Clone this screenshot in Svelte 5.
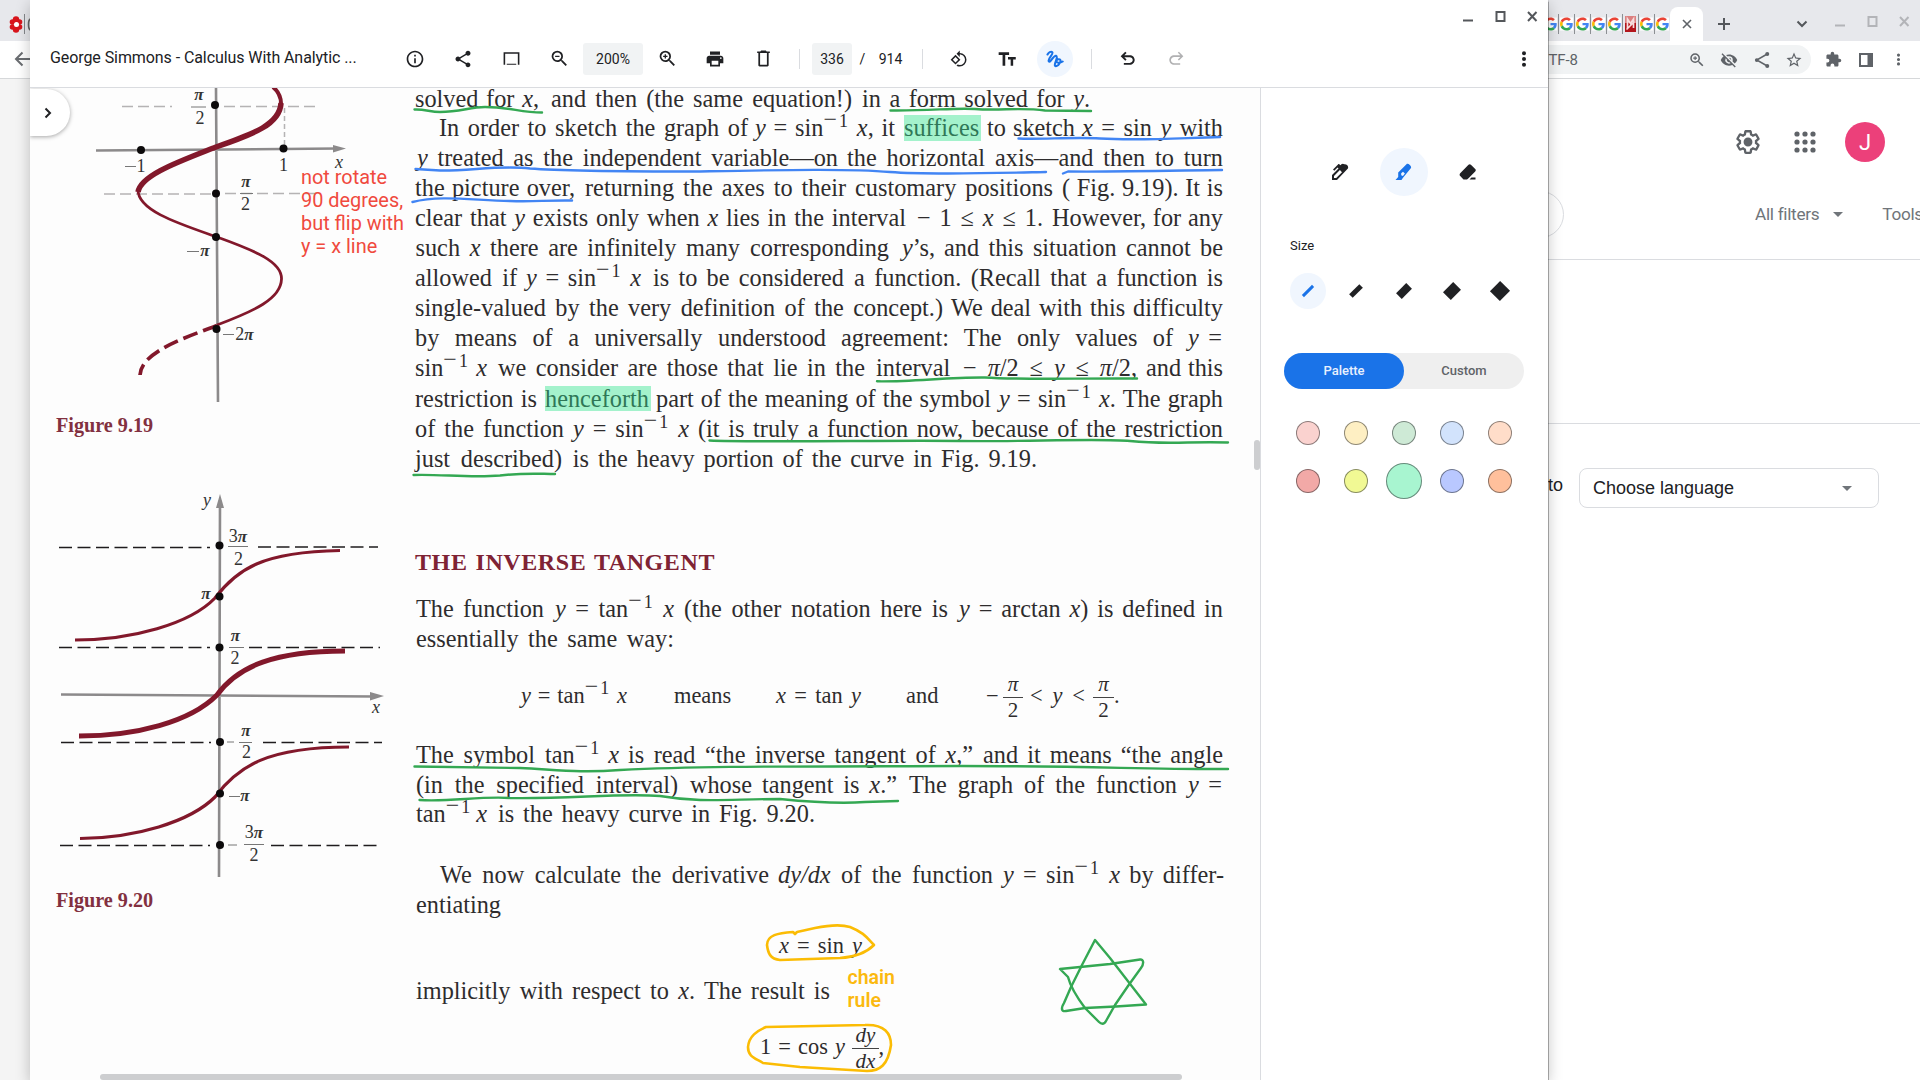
<script>
  const inv = '<sup><b>−</b>1</sup>';
  const x = '<i>x</i>';
  const y = '<i>y</i>';

  // Each line: baseline and runs of [left, right, html, class]
  const source = [
    [105.7, [[415, 539, `solved for ${x},`], [551, 852, 'and then (the same equation!)'], [862, 1090, `in a form solved for ${y}.`]]],
    [135.3, [[439, 748, 'In order to sketch the graph of'], [753, 895, `${y} = sin${inv} ${x}, it`], [904, 980.5, 'suffices', 'mark'], [987, 1075, 'to sketch'], [1082, 1223, `${x} = sin ${y} with`]]],
    [165.3, [[415, 838, `${y} treated as the independent variable—on`], [847, 1223, 'the horizontal axis—and then to turn']]],
    [195.3, [[415, 575, 'the picture over,'], [585, 1053, 'returning the axes to their customary positions'], [1062, 1223, '( Fig. 9.19). It is']]],
    [225.3, [[415, 906, `clear that ${y} exists only when ${x} lies in the interval`], [917, 1043, `− 1 ≤ ${x} ≤ 1.`], [1052, 1223, 'However, for any']]],
    [255.3, [[415.5, 740, `such ${x} there are infinitely many`], [750, 935, `corresponding ${y}’s,`], [944, 1223, 'and this situation cannot be']]],
    [285.5, [[415, 517, 'allowed if'], [524, 641, `${y} = sin${inv} ${x}`], [653, 844, 'is to be considered'], [854, 1223, 'a function. (Recall that a function is']]],
    [315.7, [[415, 943, 'single-valued by the very definition of the concept.)'], [951, 1223, 'We deal with this difficulty']]],
    [345.5, [[415, 826, 'by means of a universally understood'], [841, 1173, 'agreement: The only values of'], [1186, 1222, `${y} =`]]],
    [375.7, [[415, 487, `sin${inv} ${x}`], [498, 865, 'we consider are those that lie in the'], [876, 949, 'interval'], [963, 1137, `− <i>π</i>/2 ≤ ${y} ≤ <i>π</i>/2,`], [1146, 1223, 'and this']]],
    [405.8, [[415, 537, 'restriction is'], [545, 651, 'henceforth', 'mark'], [656, 991, 'part of the meaning of the symbol'], [997, 1223, `${y} = sin${inv} ${x}. The graph`]]],
    [435.8, [[415, 564, 'of the function'], [571, 689, `${y} = sin${inv} ${x}`], [698, 1223, '(it is truly a function now, because of the restriction']]],
    [466, [[415, 589, 'just described) is'], [598, 1037, 'the heavy portion of the curve in Fig. 9.19.']]],
    [568.9, [[415, 715, 'THE INVERSE TANGENT', 'heading']]],
    [616.6, [[416, 544, 'The function'], [553, 674, `${y} = tan${inv} ${x}`], [684, 948, '(the other notation here is'], [957, 1223, `${y} = arctan ${x}) is defined in`]]],
    [646.6, [[416, 674, 'essentially the same way:']]],
    [703, [[519, 627, `${y} = tan${inv} ${x}`, 'sm'], [674, 732, 'means', 'sm'], [776, 861, `${x} = tan ${y}`, 'sm'], [906, 938, 'and', 'sm'], [986, 1000, '−', 'sm'], [1003, 1023, '<em><i>π</i></em><em>2</em>', 'frac'], [1030, 1085, `&lt; ${y} &lt;`, 'sm'], [1093, 1114, '<em><i>π</i></em><em>2</em>', 'frac'], [1114, 1119, '.', 'sm']]],
    [761.9, [[416, 535, 'The symbol'], [545, 619, `tan${inv} ${x}`], [628, 973, `is read “the inverse tangent of ${x},”`], [983, 1223, 'and it means “the angle']]],
    [792, [[416, 752, '(in the specified interval) whose'], [762, 897, `tangent is ${x}.”`], [909, 1177, 'The graph of the function'], [1186, 1222, `${y} =`]]],
    [821.7, [[416, 487, `tan${inv} ${x}`], [498, 815, 'is the heavy curve in Fig. 9.20.']]],
    [882.4, [[440, 769, 'We now calculate the derivative'], [778, 993, '<i>dy/dx</i> of the function'], [1001, 1224, `${y} = sin${inv} ${x} by differ-`]]],
    [912.4, [[416, 501, 'entiating']]],
    [953.4, [[779, 862, `${x} = sin ${y}`, 'sm']]],
    [998.6, [[416, 695, `implicitly with respect to ${x}.`], [704, 830, 'The result is']]],
    [1054.8, [[760, 845, `1 = cos ${y}`, 'sm'], [852, 879, '<em><i>dy</i></em><em><i>dx</i></em>', 'frac'], [878.5, 884, ',', 'sm']]]
  ];

  let bottom = 88;
  const lines = source.map(([base, runs]) => {
    const top = base - 22.2;
    const gap = top - bottom;
    bottom = top + 30;
    let edge = 410;
    const parts = runs.map(([left, r, html, cls = '']) => {
      // the italic y hangs out to the left of its box
      const l = html.startsWith(y) ? left + 2 : left;
      const part = { gap: l - edge, width: r - l, html, cls };
      edge = r;
      return part;
    });
    return { gap, parts };
  });

  const icons = {
    info: 'M11 7h2v2h-2zm0 4h2v6h-2zm1-9C6.48 2 2 6.48 2 12s4.48 10 10 10 10-4.480 10-10S17.52 2 12 2zm0 18c-4.410 0-8-3.590-8-8s3.590-8 8-8 8 3.590 8 8-3.590 8-8 8z',
    share: 'M18 16.080c-.76 0-1.440.3-1.960.77L8.910 12.700c.05-.23.09-.46.09-.7s-.04-.47-.09-.7l7.050-4.110c.54.5 1.250.81 2.040.81 1.660 0 3-1.340 3-3s-1.340-3-3-3-3 1.340-3 3c0 .24.04.47.09.7L8.040 9.810C7.500 9.310 6.790 9 6 9c-1.660 0-3 1.340-3 3s1.340 3 3 3c.79 0 1.500-.31 2.040-.81l7.120 4.160c-.05.21-.08.43-.08.65 0 1.610 1.310 2.920 2.920 2.920s2.920-1.310 2.920-2.920-1.310-2.920-2.920-2.920z',
    present: 'M2 4h20v16h-2V6H4v14H2zM6 18.500h12v1.500H6z',
    zoomOut: 'M15.500 14h-.79l-.28-.27A6.470 6.470 0 0 0 16 9.500 6.500 6.500 0 1 0 9.500 16c1.610 0 3.090-.59 4.230-1.570l.27.28v.79l5 4.990L20.490 19l-4.990-5zm-6 0C7.010 14 5 11.990 5 9.500S7.010 5 9.500 5 14 7.010 14 9.500 11.990 14 9.500 14zM7 8.800h5v1.500H7z',
    zoomIn: 'M15.500 14h-.79l-.28-.27A6.470 6.470 0 0 0 16 9.500 6.500 6.500 0 1 0 9.500 16c1.610 0 3.090-.59 4.230-1.570l.27.28v.79l5 4.990L20.490 19l-4.990-5zm-6 0C7.010 14 5 11.990 5 9.500S7.010 5 9.500 5 14 7.010 14 9.500 11.990 14 9.500 14zM12 8.800h-1.750V7h-1.500v1.800H7v1.500h1.750V12h1.500v-1.700H12z',
    print: 'M19 8H5c-1.660 0-3 1.340-3 3v6h4v4h12v-4h4v-6c0-1.660-1.340-3-3-3zm-3 11H8v-5h8v5zm3-7c-.55 0-1-.45-1-1s.45-1 1-1 1 .45 1 1-.45 1-1 1zm-1-9H6v4h12V3z',
    trash: 'M16 3l-1-1H9L8 3H4v2h1.500v15.500c0 .8.700 1.500 1.500 1.500h10c.8 0 1.500-.7 1.500-1.500V5H20V3zm.3 16.800H7.700V5h8.600z',
    rotate: 'M7.340 6.410L.86 12.900l6.490 6.480 6.490-6.480-6.500-6.490zM3.690 12.900l3.660-3.660L11 12.900l-3.660 3.660-3.650-3.660zm15.670-6.260A8.950 8.950 0 0 0 13 4V.76L8.760 5 13 9.240V6c1.790 0 3.580.68 4.950 2.050a7.007 7.007 0 0 1 0 9.900A6.973 6.973 0 0 1 13 20c-.97 0-1.940-.21-2.840-.61l-1.490 1.490C10.020 21.620 11.510 22 13 22a8.950 8.950 0 0 0 6.360-2.640 8.980 8.980 0 0 0 0-12.720z',
    text: 'M2 4v3.200h4.700V20h3.200V7.200h4.600V4zm20.500 5.500h-9.300v3h3.200V20h3v-7.500h3.100z',
    undo: 'M7 19v-2.300h7.100c2 0 3.600-1.500 3.600-3.400s-1.600-3.400-3.600-3.400H7.600l2.700 2.700-1.600 1.600L3.200 8.700l5.500-5.500 1.600 1.700-2.700 2.700h6.500c3.300 0 5.900 2.500 5.900 5.700S17.400 19 14.100 19z',
    redo: 'M17 19v-1.900H9.900c-2.200 0-4-1.700-4-3.800s1.800-3.800 4-3.800h7.300l-3 3 1.300 1.300 5.300-5.200-5.300-5.300-1.300 1.300 3 3H9.900C6.600 7.600 4 10.100 4 13.300S6.600 19 9.900 19z',
    more: 'M12 8a2.200 2.200 0 1 0 0-4.400A2.200 2.200 0 0 0 12 8zm0 6.200a2.200 2.200 0 1 0 0-4.400 2.200 2.200 0 0 0 0 4.400zm0 6.200a2.200 2.200 0 1 0 0-4.400 2.200 2.200 0 0 0 0 4.400z',
    eyeOff: 'M12 7a5 5 0 0 1 5 5c0 .65-.13 1.260-.36 1.830l2.920 2.920A11.800 11.800 0 0 0 23 12C21.270 7.610 17 4.500 12 4.500c-1.400 0-2.740.25-3.980.7l2.160 2.160C10.740 7.130 11.350 7 12 7zM2 4.270l2.740 2.740A11.800 11.800 0 0 0 1 12c1.730 4.390 6 7.500 11 7.500 1.550 0 3.030-.3 4.380-.84l3.350 3.340L21 20.730 3.270 3 2 4.270zM7.530 9.800l1.550 1.550A3 3 0 0 0 12.650 14.920l1.550 1.550A5 5 0 0 1 7.530 9.800zm4.310-.78l3.150 3.150.02-.16a3 3 0 0 0-3-3l-.17.01z',
    star: 'M22 9.240l-7.190-.62L12 2 9.190 8.630 2 9.240l5.460 4.730L5.820 21 12 17.270 18.180 21l-1.630-7.030L22 9.240zM12 15.400l-3.760 2.270 1-4.280-3.320-2.880 4.380-.38L12 6.100l1.710 4.040 4.380.38-3.320 2.880 1 4.280L12 15.400z',
    puzzle: 'M20.500 11H19V7c0-1.100-.9-2-2-2h-4V3.500a2.500 2.500 0 0 0-5 0V5H4c-1.100 0-2 .9-2 2v3.800h1.500a2.700 2.700 0 0 1 0 5.400H2V20c0 1.100.9 2 2 2h3.800v-1.500a2.700 2.700 0 0 1 5.400 0V22H17c1.100 0 2-.9 2-2v-4h1.500a2.500 2.500 0 0 0 0-5z',
    gear: 'M13.850 22.250h-3.700c-.74 0-1.360-.54-1.450-1.270l-.27-1.890c-.27-.14-.53-.29-.79-.46l-1.800.72c-.7.26-1.470-.03-1.810-.65L2.200 15.530c-.35-.66-.2-1.440.36-1.880l1.530-1.190c-.01-.15-.02-.3-.02-.46s.01-.31.02-.46l-1.520-1.190c-.59-.45-.74-1.260-.37-1.880l1.850-3.190c.34-.62 1.110-.9 1.790-.63l1.810.73c.26-.17.52-.32.78-.46l.27-1.910c.09-.7.71-1.250 1.440-1.250h3.700c.74 0 1.360.54 1.450 1.270l.27 1.890c.27.14.53.29.79.46l1.800-.72c.71-.26 1.480.03 1.820.65l1.840 3.180c.36.66.2 1.440-.36 1.880l-1.520 1.190c.01.15.02.3.02.46s-.01.31-.02.46l1.520 1.190c.56.45.72 1.230.37 1.860l-1.860 3.220c-.34.62-1.110.9-1.800.63l-1.800-.72c-.26.17-.52.32-.78.46l-.27 1.910c-.1.68-.72 1.220-1.460 1.220zm-3.230-2h2.760l.37-2.550.53-.22c.44-.18.88-.44 1.340-.78l.45-.34 2.380.96 1.380-2.400-2.030-1.580.07-.56c.03-.26.06-.51.06-.78s-.03-.53-.06-.78l-.07-.56 2.030-1.580-1.390-2.400-2.390.96-.45-.35c-.42-.32-.87-.58-1.330-.77l-.52-.22-.37-2.550h-2.760l-.37 2.550-.53.21c-.44.19-.88.44-1.340.79l-.45.33-2.380-.95-1.390 2.390 2.030 1.580-.07.56a7 7 0 0 0-.06.79c0 .26.02.53.06.78l.07.56-2.030 1.580 1.380 2.400 2.390-.96.45.35c.43.33.86.58 1.330.77l.53.22zM12 15.800a3.800 3.800 0 1 0 0-7.600 3.800 3.800 0 0 0 0 7.600z'
  };

  const tabs = ['g', 'g', 'g', 'g', 'g', 'm', 'g', 'g'];
  const strokeSizes = [3, 5, 8, 11, 14];
  const swatches = ['#fad2cf', '#feefc3', '#ceead6', '#d2e3fc', '#ffddc9', '#f2a9a7', '#f1f994', '#a8f5d0', '#b9c8ff', '#ffc09c'];
</script>

{#snippet icon(name, size = 24)}
  <svg width={size} height={size} viewBox="0 0 24 24" fill="currentColor"><path fill-rule="evenodd" d={icons[name]} /></svg>
{/snippet}

{#snippet winButtons()}
  <svg width="80" height="14" viewBox="0 0 80 14" fill="none" stroke="currentColor" stroke-width="2">
    <path d="M3 11.500h10" /><path d="M36.500 3h8v9h-8z" /><path d="M68 3l8.500 9M76.500 3L68 12" />
  </svg>
{/snippet}

<div class="desktop">
  <div class="browser">
    <div class="strip">
      <div class="leftTabs">
        <svg width="30" height="24" viewBox="0 0 30 24">
          <g fill="#d8151c"><circle cx="16" cy="7.500" r="3.200" /><circle cx="12.500" cy="10" r="2.800" /><circle cx="19.500" cy="10" r="2.800" /><circle cx="12.500" cy="15" r="2.800" /><circle cx="19.500" cy="15" r="2.800" /><circle cx="16" cy="17.500" r="3.200" /></g>
          <circle cx="16.500" cy="12.500" r="2.500" fill="#fff" />
          <path d="M24.500 2v20" stroke="#84878b" /><path d="M31 7c-2 0-2.500 2-2.500 5.500S29 18 31 18" stroke="#666" stroke-width="1.600" fill="none" />
        </svg>
      </div>
      <div class="rightTabs">
        <div class="favs">
          {#each tabs as t}
            <span class="fav">
              {#if t === 'g'}
                <svg width="13" height="16" viewBox="0 0 48 48"><path fill="#fff" d="M0 0h48v48H0z" /><path fill="#EA4335" d="M24 9.500c3.540 0 6.710 1.220 9.210 3.600l6.850-6.850C35.900 2.380 30.470 0 24 0 14.620 0 6.510 5.380 2.560 13.220l7.980 6.190C12.430 13.720 17.740 9.500 24 9.500z" /><path fill="#4285F4" d="M46.980 24.550c0-1.570-.15-3.090-.38-4.550H24v9.020h12.940c-.58 2.960-2.260 5.480-4.780 7.180l7.730 6c4.510-4.180 7.090-10.360 7.090-17.650z" /><path fill="#FBBC05" d="M10.530 28.590A14.500 14.500 0 0 1 9.770 24c0-1.600.27-3.140.76-4.590l-7.980-6.190A23.900 23.900 0 0 0 0 24c0 3.880.92 7.540 2.560 10.780z" /><path fill="#34A853" d="M24 48c6.480 0 11.930-2.130 15.890-5.810l-7.730-6C30.010 37.640 27.240 38.490 24 38.490c-6.260 0-11.570-4.220-13.470-9.910l-7.980 6.190C6.510 42.620 14.620 48 24 48z" /></svg>
              {:else}
                <svg width="11" height="16" viewBox="0 0 11 16"><path fill="#dc8080" d="M0 0h11v9H0z" /><path fill="#b3161c" d="M0 7h11v9H0z" /><path d="M2.500 13V3l3 4.500L8.500 3v9M1.500 13.500l8-8" stroke="#f6dede" stroke-width="1.700" fill="none" /></svg>
              {/if}
            </span>
          {/each}
        </div>
        <div class="activeTab"><svg width="10" height="10" viewBox="0 0 10 10" stroke="#5f6368" stroke-width="1.600"><path d="M1 1l8 8M9 1L1 9" /></svg></div>
        <svg class="plus" width="12" height="12" viewBox="0 0 12 12" stroke="#54575b" stroke-width="2"><path d="M6 0v12M0 6h12" /></svg>
        <svg class="chev" width="12" height="10" viewBox="0 0 12 10" stroke="#54575b" stroke-width="2" fill="none"><path d="M1.500 2.500L6 7l4.500-4.500" /></svg>
        <div class="sysBtns">{@render winButtons()}</div>
      </div>
    </div>
    <div class="addr">
      <svg class="back" width="16" height="16" viewBox="0 0 16 16" fill="none" stroke="#6a6d71" stroke-width="2"><path d="M16 8H2M8.500 1.500L2 8l6.500 6.500" /></svg>
      <div class="pill">
        <span class="utf">UTF-8</span>
        {@render icon('zoomIn', 18)}{@render icon('eyeOff', 18)}
        <svg width="18" height="18" viewBox="0 0 24 24" fill="#5f6368"><circle cx="5" cy="12" r="2.500" /><circle cx="19" cy="4" r="2.700" /><circle cx="19" cy="20" r="2.700" /><path d="M19 4L5 12l14 8" stroke="#5f6368" stroke-width="2" fill="none" /></svg>
        {@render icon('star', 18)}
      </div>
      <div class="ext">
        {@render icon('puzzle', 17)}
        <svg width="14" height="14" viewBox="0 0 14 14"><path d="M1 1h12v12H1z" fill="none" stroke="#5f6368" stroke-width="2" /><path d="M8.500 1H13v12H8.500z" fill="#5f6368" /></svg>
        {@render icon('more', 17)}
      </div>
    </div>
    <div class="web">
      <div class="results">
        <div class="account">
          <div class="searchEnd"></div>
          <div class="tools">
            {@render icon('gear', 28)}
            <svg width="22" height="22" viewBox="0 0 22 22" fill="#5f6368">
              {#each [3, 11, 19] as cx}{#each [3, 11, 19] as cy}<circle {cx} {cy} r="2.600" />{/each}{/each}
            </svg>
            <div class="avatar">J</div>
          </div>
          <div class="filters"><span>All filters</span><i class="caret"></i><span class="bar"></span><span>Tools</span></div>
        </div>
        <div class="blank"></div>
        <div class="lang"><span>to</span><div class="select"><span>Choose language</span><i class="caret"></i></div></div>
      </div>
    </div>
  </div>

  <div class="app">
    <div class="titlebar"><div class="appBtns">{@render winButtons()}</div></div>
    <div class="toolbar">
      <div class="title">George Simmons - Calculus With Analytic ...</div>
      <span class="slot">{@render icon('info', 20)}</span>
      <span class="slot">{@render icon('share', 20)}</span>
      <span class="slot">{@render icon('present', 19)}</span>
      <span class="slot">{@render icon('zoomOut', 21)}</span>
      <span class="box zoom">200%</span>
      <span class="slot">{@render icon('zoomIn', 21)}</span>
      <span class="slot">{@render icon('print', 20)}</span>
      <span class="slot">{@render icon('trash', 19)}</span>
      <span class="sep"></span>
      <span class="box page">336</span><span class="of">/</span><span class="total">914</span>
      <span class="sep"></span>
      <span class="slot">{@render icon('rotate', 18)}</span>
      <span class="slot">{@render icon('text', 20)}</span>
      <span class="slot"><span class="ink">
        <svg width="18" height="18" viewBox="0 0 18 18" fill="none" stroke="#1a73e8" stroke-width="2.100" stroke-linecap="round"><path d="M1.500 4.500C2.500 2.500 5 .8 6.300 2.300c1.500 2-5 6.200-3.500 9C4.500 13.500 7.500 5 10 5.800c3 1.200-2.300 7.700-1 9.900 1.200 1.700 6-2 5.500-5.200-.4-2.200-3.800-1.300-4 .5-.2 2.200 3.500 2.400 6.200.5" /></svg>
      </span></span>
      <span class="sep"></span>
      <span class="slot">{@render icon('undo', 20)}</span>
      <span class="slot faded">{@render icon('redo', 20)}</span>
      <span class="grow"></span>
      <span class="slot">{@render icon('more', 22)}</span>
    </div>

    <div class="body">
      <div class="doc">
        <svg class="figures" width="379" height="992" viewBox="31 88 379 992">
          <g fill="none" stroke="#8c8a8b" stroke-width="2.600">
            <path d="M216 88L218 402M96 150.500L338 148.500" />
            <path d="M220 500L219 877M61 694.500L374 696.500" />
          </g>
          <g fill="#8c8a8b"><path d="M333 145l13 3.500-13 4z" /><path d="M216 508l4-14 4 14z" /><path d="M370 692l14 4-14 4.500z" /></g>
          <g fill="none" stroke="#b5b3b4" stroke-width="1.500">
            <path stroke-dasharray="11 5" d="M122 106.500h50M224 106.500h92M104 194h108M225 193.500h92" />
            <path d="M284.500 108v38" stroke-dasharray="5 3" />
          </g>
          <g fill="none" stroke="#1f1c1e" stroke-width="1.700" stroke-dasharray="13 5.500">
            <path d="M59 547.500h151M258 547h120M59 647.500h151M249 647.500h131M61 742.500h150M263 742.500h119M60 845.500h150M271 845.500h111" />
          </g>
          <g fill="none" stroke="#82182b">
            <path stroke-width="4" d="M273 87C279 92 281.500 99 281 106" />
            <path stroke-width="5.500" d="M281 103C280 124 254 134 216 147C178 162 141 175 138 192" />
            <path stroke-width="2.800" d="M138 190C138 211 180 224 217 237C256 251 282 262 281.500 279C281 299 254 311 217 325" />
            <path stroke-width="3.700" stroke-dasharray="15 6" d="M217 325.500C190 336 141 351 140 375" />
            <path stroke-width="3.200" d="M75 640C132 640 190 624 215 598C237 569 262 552 340 550.500" />
            <path stroke-width="5" d="M79 736C136 736 190 722 217 695C238 666 275 651 345 651" />
            <path stroke-width="3.200" d="M80 838.500C135 838 190 822 215 797C238 766 268 747 349 747" />
          </g>
          <g fill="#0c0a0b">
            {#each [[215, 105], [141, 150], [283.500, 148.500], [216, 193.500], [216, 237], [216.500, 329], [219.500, 545.500], [219.500, 596.500], [219.500, 647.500], [220, 742], [220, 793.500], [220, 845]] as [cx, cy]}
              <circle {cx} {cy} r="4" />
            {/each}
          </g>
          <path stroke="#777" d="M191 107h15M240 193.500h13M228 546.500h20M229 647.500h15M227 742h7M239 742.500h13M228 845h9M244 844.500h20M125 166.500h11M187 251.500h12M223 334.500h11M229 796.500h11" />
          <g class="math" text-anchor="middle">
            <text x="199" y="100"><tspan class="pi">π</tspan></text><text x="200" y="123.500">2</text>
            <text x="141" y="172">1</text><text x="283.500" y="170.500">1</text><text x="339" y="168" font-style="italic">x</text>
            <text x="246" y="187"><tspan class="pi">π</tspan></text><text x="245.500" y="210">2</text>
            <text x="205" y="256"><tspan class="pi">π</tspan></text><text x="244.500" y="340">2<tspan class="pi">π</tspan></text>
            <text x="207" y="506" font-style="italic">y</text>
            <text x="238" y="542">3<tspan class="pi">π</tspan></text><text x="238.500" y="565">2</text>
            <text x="206" y="599"><tspan class="pi">π</tspan></text>
            <text x="235.500" y="641"><tspan class="pi">π</tspan></text><text x="235" y="664">2</text>
            <text x="246" y="735.500"><tspan class="pi">π</tspan></text><text x="246.500" y="758">2</text>
            <text x="245" y="801"><tspan class="pi">π</tspan></text>
            <text x="254" y="838">3<tspan class="pi">π</tspan></text><text x="254" y="861">2</text>
            <text x="376" y="713" font-style="italic">x</text>
          </g>
          <g class="caption"><text x="56" y="431.700">Figure 9.19</text><text x="56" y="906.700">Figure 9.20</text></g>
        </svg>

        <div class="column">
          {#each lines as line}
            <div class="line" style="margin-top:{line.gap}px">
              {#each line.parts as p}
                <span class="run {p.cls}" style="margin-left:{p.gap}px;width:{p.width}px">{@html p.html}</span>
              {/each}
            </div>
          {/each}
        </div>

        <svg class="ink-layer" width="1229" height="992" viewBox="31 88 1229 992">
          <g fill="none" stroke-width="2.400" stroke-linecap="round" stroke-linejoin="round">
            <g stroke="#34a853">
              <path d="M414.500 109.500C425 109 430 112 440 112C460 112 470 107 485 107C510 107 520 112.500 542 112.500" />
              <path d="M890.500 110.500C930 111 955 107.500 975 109C1000 111 1020 107 1045 110.500L1091 111" />
              <path d="M877 381.300C910 382 950 377 985 377.500C1020 380 1080 378 1137 378.500" />
              <path d="M709.500 440.500C760 442.500 900 440 960 441C1020 442 1100 438 1130 441C1170 445 1190 441 1228 442.500" />
              <path d="M413.500 475C440 474 470 478 500 475.500C525 472.500 540 474 555 474" />
              <path d="M414.500 766.500L520 768C560 770 580 773 620 770C700 766 780 766.500 960 766C1090 766 1150 769.500 1228 769" />
              <path d="M419.500 800C450 802 480 796 510 798C570 799 620 793 660 796C700 803 730 799 780 799C810 802 840 804 865 802L898 801" />
              <path d="M1095 940L1110 958L1146 1004.500L1116 1006.500L1085 1008L1066 1011C1061 1012 1061 1008 1064 1003L1071 987L1082 965Z" />
              <path d="M1060 969L1110 964L1140 959.500C1144 959 1144 964 1141 968L1128 986L1115 1005L1106 1021C1104 1025 1101 1024 1099 1022L1085 1008C1076 996 1070 985 1068 977Z" />
            </g>
            <g stroke="#4285f4">
              <path d="M1018.500 138.500C1040 139.500 1075 137 1100 138.500C1140 141 1180 138 1220 137" />
              <path d="M415.500 169L440 170.500C470 171 500 165 530 168.500C560 171 620 171.500 700 171.500C780 170 850 168.500 890 172C930 175 1000 173 1046 172" />
              <path d="M1063 173.500L1068 171.500C1120 172 1180 170.500 1222 170" />
              <path d="M412.500 202C440 195 470 200 510 201C535 202 545 200 572 200.500" />
            </g>
            <g stroke="#fbbc04" stroke-width="2.600">
              <path d="M793 932C778 933 767 935 767 945C768 953 770 959 780 960L840 958C857 957 867 952 874 945C867 938 865 933 850 927C840 924 825 926 815 928L797 932L795 934Z" />
              <path d="M766 1027L865 1025C885 1024 891 1034 891 1045C888 1065 880 1071 867 1071L800 1067L763 1063C755 1058 748 1057 748 1047C749 1036 757 1031 766 1027" />
            </g>
          </g>
          <g class="note red"><text x="301" y="184">not rotate</text><text x="301" y="207.300">90 degrees,</text><text x="301" y="230">but flip with</text><text x="301" y="253">y = x line</text></g>
          <g class="note gold"><text x="847.500" y="983.500">chain</text><text x="847.500" y="1006.500">rule</text></g>
        </svg>
        <div class="expand"><svg width="8" height="12" viewBox="0 0 8 12" fill="none" stroke="#202124" stroke-width="2"><path d="M1.500 1.500L6 6l-4.500 4.500" /></svg></div>
        <div class="vbar"></div>
        <div class="hbar"></div>
      </div>

      <div class="side">
        <div class="pens">
          <span><svg width="18" height="18" viewBox="0 0 18 18"><path fill="#202124" fill-rule="evenodd" d="M1 17v-5L7.500 5.500l-1-1L3.300 7.700 2 6.400 7 1.400c.5-.5 1-.5 1.500 0l.9.9 1-1c.9-.9 2-.9 2.900 0 1.500-.6 4.800 1.300 3.600 4.200L6 17zM3 15h2.200l5.800-5.800L8.900 7 3 12.900z" /></svg></span>
          <span class="on"><svg width="18" height="18" viewBox="0 0 18 18"><path fill="#1a73e8" fill-rule="evenodd" d="M.5 17l2.700-3v-4.500L11.500 1.200c1.500-1.500 5.800 2.200 4.300 4L8 14.800 6.500 17zM6.200 10.200v2l1.700.8 2-2.400L8 8.700z" /></svg></span>
          <span><svg width="18" height="18" viewBox="0 0 18 18" fill="#202124"><path d="M1.200 10.200l8.300-8.400c.8-.8 1.600-.8 2.400 0l4.300 4.300c.8.8.8 1.500 0 2.300L9.500 15.200 8 16.500H4.500L1.200 13c-.8-.8-.8-2 0-2.800zM12.500 14.500h4v2h-6z" /></svg></span>
        </div>
        <div class="label">Size</div>
        <div class="sizes">
          {#each strokeSizes as s, i}
            <span class:on={i === 0}><svg width="24" height="24" viewBox="0 0 24 24"><rect x="4.800" y={12 - s / 2} width="14.400" height={s} fill="currentColor" transform="rotate(-45 12 12)" /></svg></span>
          {/each}
        </div>
        <div class="toggle"><span class="sel">Palette</span><span>Custom</span></div>
        <div class="swatches">
          {#each swatches as c, i}<span><i class="dot" class:big={i === 7} style="background:{c}"></i></span>{/each}
        </div>
      </div>
    </div>
  </div>
</div>

<style>
  :global(body) { overflow: hidden; }
  .desktop { position: relative; width: 1920px; height: 1080px; overflow: hidden; font-family: Roboto, sans-serif; }
  svg { display: block; flex: none; }
  .browser { height: 1080px; display: flex; flex-direction: column; background: #fff; }
  .strip { height: 41px; background: #e7e8ec; display: flex; justify-content: space-between; }
  .leftTabs { padding-top: 12px; }
  .rightTabs { width: 376px; display: flex; }
  .favs { display: flex; width: 126px; height: 41px; align-items: center; padding-top: 7px; box-sizing: border-box; justify-content: flex-end; }
  .fav { width: 15px; height: 20px; flex: none; display: flex; align-items: center; justify-content: center; border-left: 1px solid #8c8f93; }
  .activeTab { width: 33px; height: 34px; margin-top: 7px; background: #fff; border-radius: 8px 8px 0 0; display: flex; align-items: center; justify-content: center; }
  .plus { margin: 18px 0 0 15px; }
  .chev { margin: 19px 0 0 66px; }
  .sysBtns { color: #b3b4b8; margin: 14px 0 0 24px; }
  .addr { height: 37px; border-bottom: 1px solid #d6d8da; display: flex; align-items: center; color: #5f6368; }
  .back { margin: 0 0 2px 14px; }
  .pill { margin-left: 1410px; width: 371px; height: 29px; border-radius: 0 15px 15px 0; background: #f1f3f4; display: flex; align-items: center; justify-content: flex-end; gap: 14.300px; padding-right: 8px; box-sizing: border-box; }
  .pill svg { margin-left: 0; }
  .utf { font-size: 15px; margin-right: 96px; letter-spacing: -0.1px; }
  .ext { display: flex; align-items: center; margin-left: 14px; gap: 17px; }
  .web { flex: 1; background: linear-gradient(90deg, #f4f4f4 40px, #fff 40px); display: flex; justify-content: flex-end; }
  .results { width: 372px; display: flex; flex-direction: column; }
  .account { height: 180px; border-bottom: 1px solid #dadce0; position: relative; box-sizing: content-box; }
  .searchEnd { position: absolute; left: -50px; top: 112px; width: 64px; height: 45px; border: 1px solid #dadce0; border-radius: 24px; }
  .tools { display: flex; align-items: center; color: #5f6368; padding: 43px 0 0 186px; }
  .tools svg + svg { margin-left: 32px; }
  .avatar { width: 40px; height: 40px; border-radius: 50%; background: #ec407a; color: #fff; font-size: 22px; display: flex; align-items: center; justify-content: center; margin-left: 29px; }
  .filters { display: flex; align-items: center; margin: 38px 0 0 207px; height: 28px; font-size: 17.200px; letter-spacing: -0.300px; color: #70757a; white-space: nowrap; }
  .caret { border: 5.500px solid transparent; border-top-color: #70757a; border-bottom: 0; }
  .filters .caret { margin: 0 23px 0 14px; }
  .bar { width: 1px; height: 25px; background: #dadce0; margin-right: 16px; }
  .blank { height: 163px; border-bottom: 1px solid #dadce0; }
  .lang { display: flex; align-items: center; padding-top: 44px; font: 18px "Liberation Sans", sans-serif; color: #202124; }
  .lang > span { width: 31px; margin-top: -5px; }
  .select { width: 300px; height: 40px; box-sizing: border-box; border: 1px solid #dadce0; border-radius: 8px; display: flex; align-items: center; justify-content: space-between; padding: 0 26px 0 13px; }
  .select .caret { border-width: 5px 5.500px 0; }

  .app { position: absolute; left: 30px; top: 0; width: 1518px; height: 1080px; background: #fff; box-shadow: 0 0 1px 0.500px rgba(0,0,0,.3), 0 4px 14px rgba(0,0,0,.24); display: flex; flex-direction: column; }
  .titlebar { height: 32px; display: flex; justify-content: flex-end; box-sizing: border-box; padding: 9px 8px 0 0; }
  .appBtns { color: #54575b; }
  .toolbar { height: 53px; padding-bottom: 2px; display: flex; align-items: center; border-bottom: 1px solid #dadce0; color: #202124; box-sizing: content-box; font-size: 14px; }
  .title { width: 341px; margin-left: 20px; font-size: 16px; line-height: 20px; margin-top: -1px; white-space: nowrap; letter-spacing: -0.08px; }
  .slot { width: 48px; display: flex; align-items: center; justify-content: center; flex: none; }
  .faded { opacity: .35; }
  .box { background: #f1f3f4; border-radius: 3px; height: 32px; display: flex; align-items: center; justify-content: center; }
  .zoom { width: 60px; }
  .page { width: 40px; }
  .of { width: 21px; text-align: center; }
  .total { width: 35px; text-align: center; margin-right: 2px; }
  .sep { width: 1px; height: 20px; background: #dadce0; margin: 0 12px; }
  .ink { width: 36px; height: 36px; border-radius: 50%; background: #f0f6fe; display: flex; align-items: center; justify-content: center; }
  .grow { flex: 1; }
  .body { flex: 1; display: flex; min-height: 0; }
  .doc { position: relative; width: 1230px; background: #fdfdfd; overflow: hidden; display: flex; flex: none; }
  .figures { margin-left: 1px; }
  .math { font: 18px "Liberation Serif", serif; fill: #333; }
  .pi { font-style: italic; font-weight: bold; font-size: 17px; }
  .caption { font: bold 20.200px "Liberation Serif", serif; fill: #823040; }
  .column { width: 850px; display: flex; flex-direction: column; flex: none; }
  .line { height: 30px; display: flex; flex: none; font: 24.300px/30px "Liberation Serif", serif; color: #2e2c2d; }
  .run { flex: none; text-align: justify; text-align-last: justify; white-space: normal; height: 30px; word-spacing: -3px; }
  .run.mark { background: #a4f2cc; color: #2f7757; height: 25.500px; line-height: 25px; margin-top: 2px; text-align: left; text-align-last: left; }
  .run.sm { font-size: 22.400px; }
  .run.heading { font-size: 24px; font-weight: bold; color: #7f2334; letter-spacing: .600px; }
  .run :global(sup) { font-size: 18px; line-height: 0; vertical-align: 9px; letter-spacing: 1px; }
  .run :global(sup b) { font-weight: normal; font-size: 24px; letter-spacing: 2px; }
  .run.frac { display: flex; flex-direction: column; text-align-last: center; font-size: 21px; line-height: 25px; margin-top: -9px; height: 52px; }
  .run.frac :global(em) { font-style: normal; height: 25px; display: block; }
  .run.frac :global(em + em) { border-top: 1.500px solid #444; }
  .ink-layer { position: absolute; left: 1px; top: 0; }
  .note { font-family: Roboto, sans-serif; font-size: 19.900px; }
  .red { fill: #f04a3e; }
  .gold { fill: #fbb90f; font-weight: 600; font-size: 19.500px; }
  .expand { position: absolute; left: 0; top: 1px; width: 40px; height: 47px; border-radius: 0 24px 24px 0; background: #fff; box-shadow: 0 1px 4px rgba(0,0,0,.35); display: flex; align-items: center; padding-left: 14px; box-sizing: border-box; }
  .vbar { position: absolute; right: 0; top: 352px; width: 6px; height: 30px; border-radius: 3px; background: #cdced0; }
  .hbar { position: absolute; left: 70px; bottom: 0; width: 1082px; height: 6px; border-radius: 3px; background: #cdced0; }
  .side { width: 287px; border-left: 1px solid #dadce0; background: #fff; color: #202124; }
  .pens { display: flex; gap: 16px; margin: 60px 0 0 55px; }
  .pens span { width: 48px; height: 48px; border-radius: 50%; display: flex; align-items: center; justify-content: center; }
  .on { background: #f0f6fe; color: #1a73e8; }
  .label { font-size: 13px; line-height: 16px; margin: 42px 0 0 29px; }
  .sizes { display: flex; gap: 12px; margin: 19px 0 0 29px; }
  .sizes span { width: 36px; height: 36px; border-radius: 50%; display: flex; align-items: center; justify-content: center; }
  .toggle { display: flex; width: 240px; height: 36px; margin: 44px 0 0 23px; border-radius: 18px; background: #efefef; font-size: 13px; font-weight: 500; color: #5f6368; }
  .toggle span { width: 120px; line-height: 35px; text-align: center; border-radius: 18px; }
  .toggle .sel { background: #1a73e8; color: #e8f0fe; }
  .swatches { display: grid; grid-template-columns: repeat(5, 48px); grid-auto-rows: 48px; margin: 20px 0 0 23px; }
  .swatches span { display: flex; align-items: center; justify-content: center; }
  .dot { width: 24px; height: 24px; box-sizing: border-box; border: 1px solid rgba(32,33,36,.5); border-radius: 50%; }
  .dot.big { width: 36px; height: 36px; }
</style>
